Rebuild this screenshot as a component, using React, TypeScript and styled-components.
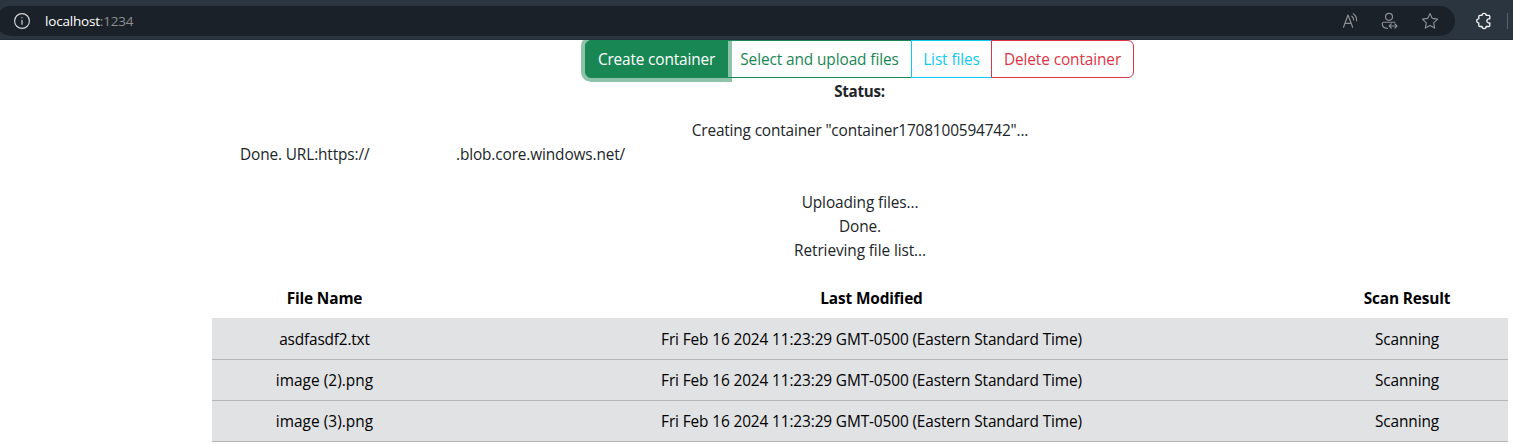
import React from "react";
import styled, { createGlobalStyle, css } from "styled-components";

const GlobalStyle = createGlobalStyle`
  *, *::before, *::after { box-sizing: border-box; }
  html, body { margin: 0; height: 444px; overflow: hidden; background: #fff; }
  body {
    font-family: "Segoe UI", "Open Sans", "Noto Sans", sans-serif;
    font-size: 15.4px;
    line-height: 24px;
    color: #212529;
  }
`;

const BrowserBar = styled.header`
  position: relative;
  z-index: 2;
  display: flex;
  align-items: center;
  height: 40px;
  padding-top: 2px;
  background: #2b3540;
  border-bottom: 1px solid #252d37;
`;

const AddressField = styled.div`
  display: flex;
  align-items: center;
  width: 1459px;
  height: 30px;
  margin-left: -4px;
  padding: 0 16px 0 17px;
  border-radius: 15px;
  background: #1b2128;
  flex: none;
`;

const Url = styled.div`
  flex: 1;
  margin-left: 14px;
  font-size: 13.5px;
  line-height: 20px;
  letter-spacing: -0.19px;
  color: #8b8f94;
`;

const Host = styled.span`
  color: #fff;
`;

const FieldActions = styled.div`
  display: flex;
  gap: 22px;
  color: #8d9093;
`;

const Glyph = styled.svg`
  display: block;
  width: 18px;
  height: 18px;
  fill: none;
  stroke: currentColor;
  stroke-width: 1.15;
  stroke-linecap: round;
  stroke-linejoin: round;
  flex: none;
`;

const InfoGlyph = styled(Glyph)`
  color: #d6d7d9;
`;

const ExtensionGlyph = styled(Glyph)`
  margin-left: 20px;
  color: #f4f5f6;
  stroke-width: 1.3;
`;

const Divider = styled.span`
  width: 1px;
  height: 16px;
  margin-left: 14px;
  background: #59616b;
`;

const Page = styled.main`
  width: 1296px;
  margin-left: 212px;
  text-align: center;
`;

const ButtonGroup = styled.div`
  display: flex;
  justify-content: center;
  height: 38px;
  margin-right: 1px;
`;

const ActionButton = styled.button<{ $color: string; $width: number; $active?: boolean; $spacing: number }>`
  position: relative;
  width: ${(p) => p.$width}px;
  height: 38px;
  margin: 0 0 0 -1px;
  padding: 2px 0 0;
  border: 1px solid ${(p) => p.$color};
  background: transparent;
  color: ${(p) => p.$color};
  font: inherit;
  letter-spacing: ${(p) => p.$spacing}px;
  white-space: nowrap;
  &:first-child { margin-left: 0; border-radius: 6px 0 0 6px; }
  &:last-child { border-radius: 0 6px 6px 0; }
  ${(p) =>
    p.$active &&
    css`
      z-index: 1;
      background: ${p.$color};
      color: #fff;
      box-shadow: 0 0 0 4px rgba(25, 135, 84, 0.5);
    `}
`;

const StatusTitle = styled.div`
  height: 24px;
  line-height: 26px;
  font-weight: 700;
  font-size: 15.2px;
  letter-spacing: -0.3px;
  margin-right: 1px;
`;

const StatusLog = styled.div`
  height: 160px;
  margin-top: 16px;
`;

const LogLine = styled.div<{ $spacing: number }>`
  height: 24px;
  line-height: 25px;
  white-space: nowrap;
  letter-spacing: ${(p) => p.$spacing}px;
`;

const UrlLine = styled(LogLine)`
  display: flex;
  gap: 87px;
  padding-left: 28px;
`;

const UrlPrefix = styled.span`
  width: 129px;
  text-align: left;
`;

const FileTable = styled.table`
  width: 1296px;
  table-layout: fixed;
  border-collapse: separate;
  border-spacing: 0;
  color: #000;
`;

const HeadCell = styled.th<{ $width: number }>`
  width: ${(p) => p.$width}px;
  height: 41px;
  padding: 1px 0 0;
  border-bottom: 1px solid #e1e2e4;
  font-size: 15.4px;
  font-weight: 700;
  letter-spacing: -0.15px;
`;

const Cell = styled.td<{ $spacing: number }>`
  height: 41px;
  padding: 2px 0 0;
  background: #e1e2e4;
  border-bottom: 1px solid #b4b5b7;
  letter-spacing: ${(p) => p.$spacing}px;
  white-space: nowrap;
`;

const files = ["asdfasdf2.txt", "image (2).png", "image (3).png"];
const modified = "Fri Feb 16 2024 11:23:29 GMT-0500 (Eastern Standard Time)";

export default function App() {
  return (
    <>
      <GlobalStyle />
      <BrowserBar>
        <AddressField>
          <InfoGlyph viewBox="0 0 18 18">
            <circle cx="9" cy="9" r="7.4" />
            <path d="M9 8.2v4M9 5.6v.2" />
          </InfoGlyph>
          <Url><Host>localhost</Host>:1234</Url>
          <FieldActions>
            <Glyph viewBox="0 0 18 18">
              <path d="M2.5 15.3 7 3l4.7 12.3M4 11.3h6.1M10.8 4.2q2 1.3 1.8 3.8M12.3 1.8q3.6 2.4 3.3 7" />
            </Glyph>
            <Glyph viewBox="0 0 18 18">
              <circle cx="8" cy="4.8" r="3.5" />
              <path d="M14 10.2H2.5q-1.3 0-1.3 1.3c0 3 2.3 4.7 5.2 4.9M8.2 14h7.8M10.3 11.9 8.2 14l2.1 2.1M13.9 11.9 16 14l-2.1 2.1" />
            </Glyph>
            <Glyph viewBox="0 0 18 18">
              <path d="m9 1.5 2.3 4.9 5.3.7-3.9 3.7 1 5.3L9 13.5l-4.7 2.6 1-5.3-3.9-3.7 5.3-.7z" />
            </Glyph>
          </FieldActions>
        </AddressField>
        <ExtensionGlyph viewBox="0 0 18 18">
          <path d="M4.8 3.4H7a2.1 2.1 0 0 1 4.2 0h2.6a1 1 0 0 1 1 1v2.4h-.8a2.1 2.1 0 0 0 0 4.2h.8v2.5a1 1 0 0 1-1 1h-2.6a2.1 2.1 0 0 1-4.2 0H4.8a1 1 0 0 1-1-1V11a2.1 2.1 0 0 1 0-4.2V4.4a1 1 0 0 1 1-1z" />
        </ExtensionGlyph>
        <Divider />
      </BrowserBar>
      <Page>
        <ButtonGroup>
          <ActionButton $color="#198754" $width={143} $spacing={-0.16} $active>Create container</ActionButton>
          <ActionButton $color="#198754" $width={185} $spacing={-0.1}>Select and upload files</ActionButton>
          <ActionButton $color="#0dcaf0" $width={81} $spacing={-0.1}>List files</ActionButton>
          <ActionButton $color="#dc3545" $width={143} $spacing={-0.1}>Delete container</ActionButton>
        </ButtonGroup>
        <StatusTitle>Status:</StatusTitle>
        <StatusLog>
          <LogLine $spacing={-0.16}>Creating container "container1708100594742"...</LogLine>
          <UrlLine $spacing={-0.13}>
            <UrlPrefix>Done. URL:https://</UrlPrefix>
            <span>.blob.core.windows.net/</span>
          </UrlLine>
          <LogLine $spacing={0} />
          <LogLine $spacing={-0.1}>Uploading files...</LogLine>
          <LogLine $spacing={-0.1}>Done.</LogLine>
          <LogLine $spacing={-0.1}>Retrieving file list...</LogLine>
        </StatusLog>
        <FileTable>
          <thead>
            <tr>
              <HeadCell $width={225}>File Name</HeadCell>
              <HeadCell $width={869}>Last Modified</HeadCell>
              <HeadCell $width={202}>Scan Result</HeadCell>
            </tr>
          </thead>
          <tbody>
            {files.map((name) => (
              <tr key={name}>
                <Cell $spacing={name.startsWith("image") ? 0.05 : -0.18}>{name}</Cell>
                <Cell $spacing={-0.12}>{modified}</Cell>
                <Cell $spacing={-0.1}>Scanning</Cell>
              </tr>
            ))}
          </tbody>
        </FileTable>
      </Page>
    </>
  );
}
